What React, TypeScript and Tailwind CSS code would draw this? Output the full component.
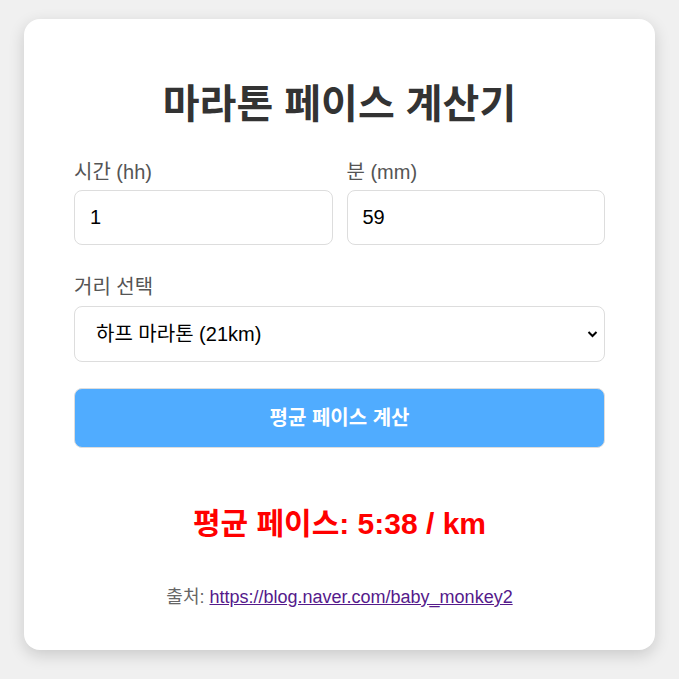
import React, { useState } from 'react';

const FONT = '[font-family:"Liberation_Sans","Noto_Sans_CJK_KR",sans-serif]';

export default function App() {
  const [hours, setHours] = useState('1');
  const [minutes, setMinutes] = useState('59');
  const [distance, setDistance] = useState('21.0975');

  return (
    <div className={`min-h-screen bg-[#f0f0f0] pt-[19px] ${FONT}`}>
      <div className="mx-auto w-[631px] h-[631px] rounded-[16px] bg-white px-[50px] pt-[50px] shadow-[0_5px_16px_rgba(0,0,0,0.16)]">
        <h1 className="text-center text-[40px] leading-[70px] font-bold text-[#333]">마라톤 페이스 계산기</h1>

        {/* time inputs */}
        <div className="mt-[22px] grid grid-cols-2 gap-[14px]">
          <div>
            <label className="block text-[20px] leading-[22px] text-[#555]">시간 (hh)</label>
            <input
              value={hours}
              onChange={(e) => setHours(e.target.value)}
              className="mt-[7px] block h-[55px] w-full rounded-[8px] border border-[#ddd] px-[15px] text-[20px] text-black outline-none"
            />
          </div>
          <div>
            <label className="block text-[20px] leading-[22px] text-[#555]">분 (mm)</label>
            <input
              value={minutes}
              onChange={(e) => setMinutes(e.target.value)}
              className="mt-[7px] block h-[55px] w-full rounded-[8px] border border-[#ddd] px-[15px] text-[20px] text-black outline-none"
            />
          </div>
        </div>

        {/* distance */}
        <label className="mt-[31px] block text-[20px] leading-[22px] text-[#555]">거리 선택</label>
        <div className="relative mt-[8px]">
          <select
            value={distance}
            onChange={(e) => setDistance(e.target.value)}
            className="block h-[56px] w-full appearance-none rounded-[8px] border border-[#ddd] bg-white pl-[21px] text-[20px] text-black outline-none"
          >
            <option value="5">5km</option>
            <option value="10">10km</option>
            <option value="21.0975">하프 마라톤 (21km)</option>
            <option value="42.195">풀 마라톤 (42km)</option>
          </select>
          <svg className="pointer-events-none absolute right-[7px] top-[23px]" width="11" height="10" viewBox="0 0 11 10">
            <path d="M1.5 3 L5.5 7 L9.5 3" fill="none" stroke="#000" strokeWidth="2" />
          </svg>
        </div>

        <button className="mt-[26px] block h-[60px] w-full rounded-[8px] border border-[#ddd] bg-[#50acff] text-[20px] font-bold text-white">
          평균 페이스 계산
        </button>

        <div className="mt-[59px] text-center text-[30px] leading-[34px] font-bold text-[#ff0000]">평균 페이스: 5:38 / km</div>

        <p className="mt-[46px] text-center text-[18px] leading-[20px] text-[#666]">
          출처: <a href="#" className="text-[#551a8b] underline">https://blog.naver.com/baby_monkey2</a>
        </p>
      </div>
    </div>
  );
}
